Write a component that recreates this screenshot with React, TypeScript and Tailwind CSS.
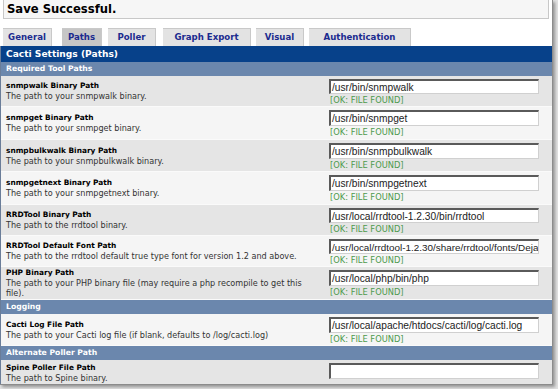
import React from "react";

const V = { fontFamily: '"DejaVu Sans", Verdana, sans-serif' };
const A = { fontFamily: '"Liberation Sans", Arial, sans-serif' };

type RowProps = {
  label: string;
  desc: React.ReactNode;
  value: string;
  ok?: boolean;
  alt?: boolean;
  h?: string;
  small?: boolean;
};

function Row({ label, desc, value, ok = true, alt, h = "h-[32px]", small }: RowProps) {
  return (
    <div className={`flex ${h} ${alt ? "bg-[#f5f5f5]" : "bg-[#e5e5e5]"} border-b border-[#fafafa]`}>
      <div className="w-[328px] pl-[5px] flex flex-col justify-center" style={V}>
        <div className="text-[7.4px] leading-[10px] font-bold text-black whitespace-nowrap">{label}</div>
        <div className="text-[8.1px] leading-[10px] text-[#333]">{desc}</div>
      </div>
      <div className="pt-[3px] flex flex-col">
        <div
          className={`w-[210px] h-[16px] bg-white border-t-2 border-l-2 border-t-[#5a5a5a] border-l-[#5a5a5a] border-r border-b border-r-[#d0d0d0] border-b-[#d0d0d0] ${small ? "text-[9.9px]" : "text-[10.2px]"} leading-[13px] pl-[1px] text-[#222] whitespace-nowrap overflow-hidden`}
          style={A}
        >
          {value}
        </div>
        {ok && (
          <div className="text-[8.3px] leading-[11px] text-[#4d9a4d] mt-[1px] pl-[1px]" style={V}>
            [OK: FILE FOUND]
          </div>
        )}
      </div>
    </div>
  );
}

function Section({ title }: { title: string }) {
  return (
    <div
      className="h-[14px] bg-[#6b87ad] text-white font-bold text-[7.7px] leading-[14px] pl-[5px]"
      style={V}
    >
      {title}
    </div>
  );
}

const tabs = [
  { t: "General", w: "w-[49px]", ml: "ml-[3px]" },
  { t: "Paths", w: "w-[40px]", ml: "ml-[10px]", active: true },
  { t: "Poller", w: "w-[48px]", ml: "ml-[6px]" },
  { t: "Graph Export", w: "w-[88px]", ml: "ml-[7px]" },
  { t: "Visual", w: "w-[48px]", ml: "ml-[5px]" },
  { t: "Authentication", w: "w-[102px]", ml: "ml-[5px]" },
];

export default function App() {
  return (
    <div className="w-[558px] h-[389px] bg-[#e2e2e2] overflow-hidden">
      <div className="w-[553px] h-[385px] bg-white overflow-hidden flex flex-col border-r border-b border-[#8c8c8c] shadow-[2px_2px_3px_rgba(0,0,0,0.35)]">
        <div className="mx-[3px] h-[19px] shrink-0 bg-[#f6f6f6] border border-t-0 border-[#c8c8c8] pl-[3px] text-[11.6px] leading-[18px] font-bold text-black" style={V}>
          Save Successful.
        </div>
        <div className="flex mt-[9px] h-[18px] shrink-0">
          {tabs.map((tb) => (
            <div
              key={tb.t}
              className={`${tb.w} ${tb.ml} h-[18px] flex items-center justify-center text-[8.6px] font-bold text-[#1c2b8f] border-t border-r border-[#c9c9c9] ${tb.active ? "bg-[#c6c6c6]" : "bg-[#e3e3e3]"}`}
              style={V}
            >
              {tb.t}
            </div>
          ))}
        </div>
        <div className="flex-1 flex flex-col border-l border-[#6a7d99]">
          <div className="h-[16px] bg-[#07418a] text-white font-bold text-[9.1px] leading-[16px] pl-[5px]" style={V}>
            Cacti Settings (Paths)
          </div>
          <Section title="Required Tool Paths" />
          <Row label="snmpwalk Binary Path" desc="The path to your snmpwalk binary." value="/usr/bin/snmpwalk" h="h-[31px]" />
          <Row label="snmpget Binary Path" desc="The path to your snmpget binary." value="/usr/bin/snmpget" alt h="h-[33px]" />
          <Row label="snmpbulkwalk Binary Path" desc="The path to your snmpbulkwalk binary." value="/usr/bin/snmpbulkwalk" />
          <Row label="snmpgetnext Binary Path" desc="The path to your snmpgetnext binary." value="/usr/bin/snmpgetnext" alt h="h-[33px]" />
          <Row label="RRDTool Binary Path" desc="The path to the rrdtool binary." value="/usr/local/rrdtool-1.2.30/bin/rrdtool" h="h-[31px]" />
          <Row
            label="RRDTool Default Font Path"
            desc={<span className="whitespace-nowrap">The path to the rrdtool default true type font for version 1.2 and above.</span>}
            value="/usr/local/rrdtool-1.2.30/share/rrdtool/fonts/Deja"
            alt
            small
            h="h-[31px]"
          />
          <Row
            label="PHP Binary Path"
            desc={
              <>
                <span className="whitespace-nowrap">The path to your PHP binary file (may require a php recompile to get this</span>
                <br />
                file).
              </>
            }
            value="/usr/local/php/bin/php"
            h="h-[33px]"
          />
          <Section title="Logging" />
          <Row
            label="Cacti Log File Path"
            desc="The path to your Cacti log file (if blank, defaults to /log/cacti.log)"
            value="/usr/local/apache/htdocs/cacti/log/cacti.log"
            alt
          />
          <Section title="Alternate Poller Path" />
          <Row label="Spine Poller File Path" desc="The path to Spine binary." value="" ok={false} h="h-[26px]" />
        </div>
      </div>
    </div>
  );
}
